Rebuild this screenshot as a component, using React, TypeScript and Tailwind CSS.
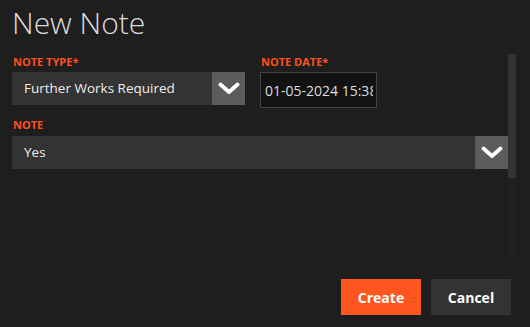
import React from "react";

// White chevron used inside the select boxes
function Chevron() {
  return (
    <svg viewBox="0 0 22 13" className="w-[22px] h-[13px]" fill="none" aria-hidden="true">
      <path d="M2.5 2.5L11 10L19.5 2.5" stroke="#ffffff" strokeWidth="3.8" strokeLinecap="round" strokeLinejoin="round" />
    </svg>
  );
}

function SelectBox({ value, className }: { value: string; className?: string }) {
  return (
    <div className={`flex h-[33px] bg-[#333333] ${className ?? ""}`}>
      <div className="flex-1 flex items-center pl-[12px] text-[13.5px] text-[#eeeeee]">{value}</div>
      <div className="w-[33px] flex items-center justify-center bg-[#5c5c5c]">
        <Chevron />
      </div>
    </div>
  );
}

function Label({ children }: { children: React.ReactNode }) {
  return (
    <div className="text-[11px] leading-[14px] font-bold uppercase text-[#ff4f1f] pl-[1px]">{children}</div>
  );
}

export default function App() {
  return (
    <div
      className="w-[530px] h-[327px] bg-[#1e1e1e] flex flex-col overflow-hidden"
      style={{ fontFamily: '"Open Sans", "Liberation Sans", sans-serif' }}
    >
      {/* Header */}
      <div className="h-[54px] pt-[3px] pl-[12px] shrink-0">
        <h1 className="text-[30px] leading-[40px] font-light text-[#dddddd]">New Note</h1>
      </div>

      {/* Body with scrollbar */}
      <div className="h-[205px] shrink-0 flex pl-[12px] pr-[14px]">
        <div className="w-[496px] overflow-hidden pt-[1px]">
          <div className="flex gap-[15px]">
            <div className="w-[233px] flex flex-col gap-[3px]">
              <Label>Note Type*</Label>
              <SelectBox value="Further Works Required" />
            </div>
            <div className="flex flex-col gap-[3px]">
              <Label>Note Date*</Label>
              <input
                readOnly
                value="01-05-2024 15:38"
                className="w-[117px] h-[36px] bg-[#121212] border border-[#444444] pl-[4px] pr-[3px] text-[14px] text-[#dddddd] outline-none"
              />
            </div>
          </div>

          <div className="mt-[10px] flex flex-col gap-[4px]">
            <Label>Note</Label>
            <SelectBox value="Yes" />
          </div>
        </div>
        <div className="w-[8px] bg-[#202020]">
          <div className="h-[124px] bg-[#333333]" />
        </div>
      </div>

      {/* Footer */}
      <div className="flex justify-end gap-[10px] pt-[20px] pr-[19px]">
        <button className="w-[80px] h-[36px] bg-[#ff551e] text-white text-[14px] font-bold">Create</button>
        <button className="w-[80px] h-[36px] bg-[#333333] text-white text-[14px] font-bold">Cancel</button>
      </div>
    </div>
  );
}
